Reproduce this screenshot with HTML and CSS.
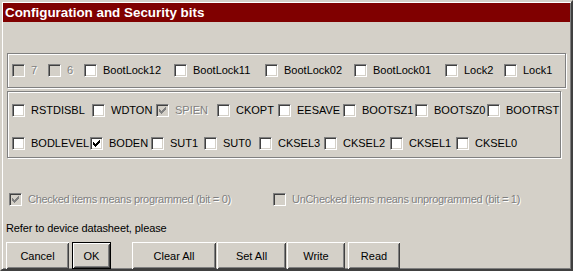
FILE: index.html
```html
<!DOCTYPE html>
<html lang="en">
<head>
    <meta charset="UTF-8">
    <title>Configuration and Security bits</title>
    <link rel="stylesheet" href="styles.css">
</head>
<body>
    <div class="window">
        <div class="titlebar">Configuration and Security bits</div>

        <div class="group group-lock">
            <div class="row row-lock">
                <label class="check disabled"><span class="box"></span>7</label>
                <label class="check disabled"><span class="box"></span>6</label>
                <label class="check"><span class="box"></span>BootLock12</label>
                <label class="check"><span class="box"></span>BootLock11</label>
                <label class="check"><span class="box"></span>BootLock02</label>
                <label class="check"><span class="box"></span>BootLock01</label>
                <label class="check"><span class="box"></span>Lock2</label>
                <label class="check"><span class="box"></span>Lock1</label>
            </div>
        </div>

        <div class="group group-fuse">
            <div class="row row-high">
                <label class="check"><span class="box"></span>RSTDISBL</label>
                <label class="check"><span class="box"></span>WDTON</label>
                <label class="check disabled"><span class="box"><svg viewBox="1 1 11 11" width="11" height="11"><path d="M3 5H4V6H5V7H6V6H7V5H8V4H9V3H10V6H9V7H8V8H7V9H6V10H5V9H4V8H3Z"/></svg></span>SPIEN</label>
                <label class="check"><span class="box"></span>CKOPT</label>
                <label class="check"><span class="box"></span>EESAVE</label>
                <label class="check"><span class="box"></span>BOOTSZ1</label>
                <label class="check"><span class="box"></span>BOOTSZ0</label>
                <label class="check"><span class="box"></span>BOOTRST</label>
            </div>
            <div class="row row-low">
                <label class="check"><span class="box"></span>BODLEVEL</label>
                <label class="check"><span class="box"><svg viewBox="1 1 11 11" width="11" height="11"><path d="M3 5H4V6H5V7H6V6H7V5H8V4H9V3H10V6H9V7H8V8H7V9H6V10H5V9H4V8H3Z"/></svg></span>BODEN</label>
                <label class="check"><span class="box"></span>SUT1</label>
                <label class="check"><span class="box"></span>SUT0</label>
                <label class="check"><span class="box"></span>CKSEL3</label>
                <label class="check"><span class="box"></span>CKSEL2</label>
                <label class="check"><span class="box"></span>CKSEL1</label>
                <label class="check"><span class="box"></span>CKSEL0</label>
            </div>
        </div>

        <div class="legend">
            <label class="check disabled"><span class="box"><svg viewBox="1 1 11 11" width="11" height="11"><path d="M3 5H4V6H5V7H6V6H7V5H8V4H9V3H10V6H9V7H8V8H7V9H6V10H5V9H4V8H3Z"/></svg></span>Checked items means programmed (bit = 0)</label>
            <label class="check disabled"><span class="box"></span>UnChecked items means unprogrammed (bit = 1)</label>
        </div>

        <p class="hint">Refer to device datasheet, please</p>

        <div class="buttons">
            <button class="btn btn-cancel">Cancel</button>
            <button class="btn btn-ok default">OK</button>
            <button class="btn btn-clear">Clear All</button>
            <button class="btn btn-set">Set All</button>
            <button class="btn btn-write">Write</button>
            <button class="btn btn-read">Read</button>
        </div>
    </div>
</body>
</html>
```

FILE: styles.css
```css
body {
    margin: 0;
    background-color: #d4d0c8;
    font-family: "Liberation Sans", Arial, sans-serif;
    font-size: 11px;
    color: #000;
}
.window {
    width: 573px;
    height: 271px;
    box-sizing: border-box;
    padding: 1px;
    border: 2px solid;
    border-color: #d4d0c8 #404040 #404040 #d4d0c8;
    box-shadow: inset 1px 1px 0 #fff, inset -1px -1px 0 #808080;
    background-color: #d4d0c8;
    overflow: hidden;
}
.titlebar {
    height: 19px;
    line-height: 19px;
    padding-left: 2px;
    background-color: #800000;
    color: #fff;
    font-weight: bold;
    font-size: 13.4px;
    white-space: nowrap;
}
.group {
    box-sizing: border-box;
    margin-left: 4px;
    border: 1px solid #808080;
    box-shadow: 1px 1px 0 #fff, inset 1px 1px 0 #fff;
}
.group-lock {
    width: 559px;
    height: 35px;
    margin-top: 31px;
    padding: 10px 0 0 4px;
}
.group-fuse {
    width: 554px;
    height: 67px;
    margin-top: 3px;
    padding: 12px 0 0 4px;
}
.row {
    display: grid;
    height: 13px;
    align-items: center;
}
.row-low {
    margin-top: 20px;
}
.row-lock {
    grid-template-columns: 36px 36px 90px 91px 89px 91px 59px auto;
}
.row-high {
    grid-template-columns: 80px 64px 61px 61px 65px 72px 72px auto;
}
.row-low {
    grid-template-columns: 78px 61px 53px 55px 65px 66px 66px auto;
}
.check {
    display: flex;
    align-items: center;
    gap: 6px;
    height: 13px;
    line-height: 13px;
    white-space: nowrap;
}
.box {
    display: inline-block;
    flex: none;
    width: 11px;
    height: 11px;
    border: 1px solid;
    border-color: #808080 #fff #fff #808080;
    box-shadow: inset 1px 1px 0 #404040, inset -1px -1px 0 #d4d0c8;
    background-color: #fff;
}
.box svg {
    display: block;
    shape-rendering: crispEdges;
    fill: #000;
}
.disabled {
    color: #808080;
    text-shadow: 1px 1px 0 #fff;
}
.disabled .box {
    background-color: #d4d0c8;
}
.disabled .box svg {
    fill: #808080;
}
.legend {
    display: grid;
    grid-template-columns: 264px auto;
    margin: 35px 0 0 6px;
    letter-spacing: -0.3px;
}
.hint {
    margin: 16px 0 0 3px;
    line-height: 13px;
    letter-spacing: -0.1px;
}
.buttons {
    display: flex;
    margin-top: 7px;
    padding-left: 3px;
}
.btn {
    box-sizing: border-box;
    height: 27px;
    padding: 0;
    font-family: inherit;
    font-size: 11px;
    color: #000;
    background-color: #d4d0c8;
    border: none;
    border-radius: 0;
    box-shadow: inset 1px 1px 0 #fff, inset -1px -1px 0 #404040, inset 2px 2px 0 #d4d0c8, inset -2px -2px 0 #808080;
}
.default {
    border: 1px solid #000;
}
.btn-cancel { width: 63px; }
.btn-ok { width: 39px; margin-left: 3px; }
.btn-clear { width: 84px; margin-left: 21px; }
.btn-set { width: 69px; margin-left: 1px; }
.btn-write { width: 58px; margin-left: 1px; }
.btn-read { width: 52px; margin-left: 3px; }
```
